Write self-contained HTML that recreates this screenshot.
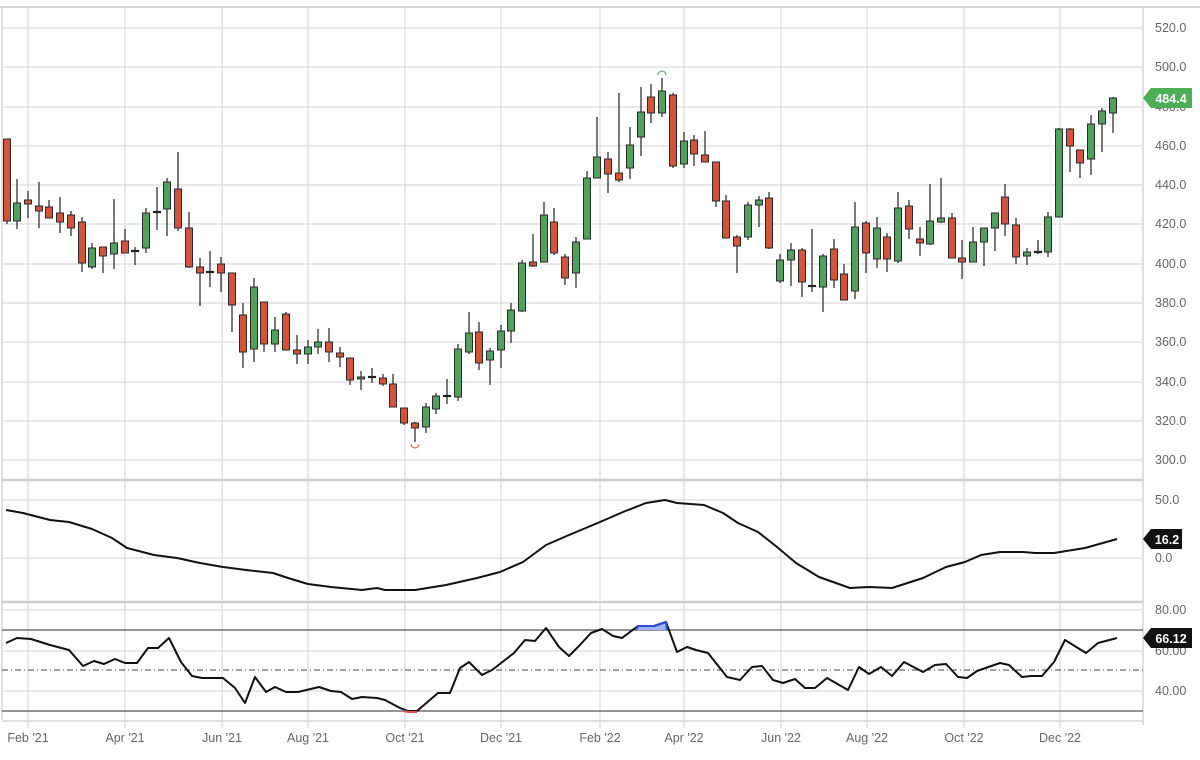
<!DOCTYPE html>
<html><head><meta charset="utf-8"><style>
html,body{margin:0;padding:0;background:#fff;}
svg{display:block;font-family:"Liberation Sans",sans-serif;}
.g{stroke:#dcdcdc;stroke-width:1.3;}
.r{fill:#d4533b;stroke:#2a2a2a;stroke-width:1;}
.gr{fill:#52a05e;stroke:#2a2a2a;stroke-width:1;}
.w{stroke:#222;stroke-width:1.2;}
.lab{fill:#666;font-size:12.5px;}
</style></head><body>
<svg width="1200" height="760" viewBox="0 0 1200 760" xmlns="http://www.w3.org/2000/svg">
<rect width="1200" height="760" fill="#fff"/>
<line x1="0" y1="7" x2="1200" y2="7" stroke="#d6d6d6" stroke-width="2"/>
<line x1="2" y1="7" x2="2" y2="720" stroke="#d6d6d6" stroke-width="1.5"/>
<line x1="1143" y1="7" x2="1143" y2="725" stroke="#d6d6d6" stroke-width="1.5"/>
<g class="g">
<line x1="28" y1="7" x2="28" y2="728"/><line x1="125" y1="7" x2="125" y2="728"/><line x1="222" y1="7" x2="222" y2="728"/><line x1="308" y1="7" x2="308" y2="728"/><line x1="405" y1="7" x2="405" y2="728"/><line x1="501" y1="7" x2="501" y2="728"/><line x1="600" y1="7" x2="600" y2="728"/><line x1="684" y1="7" x2="684" y2="728"/><line x1="781" y1="7" x2="781" y2="728"/><line x1="867" y1="7" x2="867" y2="728"/><line x1="964" y1="7" x2="964" y2="728"/><line x1="1060" y1="7" x2="1060" y2="728"/>
</g>
<g class="g">
<line x1="2" y1="28" x2="1143" y2="28"/><line x1="2" y1="67" x2="1143" y2="67"/><line x1="2" y1="107" x2="1143" y2="107"/><line x1="2" y1="146" x2="1143" y2="146"/><line x1="2" y1="185" x2="1143" y2="185"/><line x1="2" y1="224" x2="1143" y2="224"/><line x1="2" y1="264" x2="1143" y2="264"/><line x1="2" y1="303" x2="1143" y2="303"/><line x1="2" y1="342" x2="1143" y2="342"/><line x1="2" y1="382" x2="1143" y2="382"/><line x1="2" y1="421" x2="1143" y2="421"/><line x1="2" y1="460" x2="1143" y2="460"/>
<line x1="2" y1="500" x2="1143" y2="500"/><line x1="2" y1="558" x2="1143" y2="558"/>
<line x1="2" y1="610" x2="1143" y2="610"/><line x1="2" y1="651" x2="1143" y2="651"/><line x1="2" y1="691" x2="1143" y2="691"/>
</g>
<line x1="2" y1="480" x2="1143" y2="480" stroke="#cfcfcf" stroke-width="2.5"/>
<line x1="2" y1="602" x2="1143" y2="602" stroke="#cfcfcf" stroke-width="2.5"/>
<line x1="2" y1="721" x2="1143" y2="721" stroke="#d6d6d6" stroke-width="1.5"/>
<g class="lab">
<text x="1155" y="32">520.0</text><text x="1155" y="71">500.0</text><text x="1155" y="111">480.0</text><text x="1155" y="150">460.0</text><text x="1155" y="189">440.0</text><text x="1155" y="228">420.0</text><text x="1155" y="268">400.0</text><text x="1155" y="307">380.0</text><text x="1155" y="346">360.0</text><text x="1155" y="386">340.0</text><text x="1155" y="425">320.0</text><text x="1155" y="464">300.0</text>
<text x="1155" y="504">50.0</text><text x="1155" y="562">0.0</text>
<text x="1155" y="614">80.00</text><text x="1155" y="655">60.00</text><text x="1155" y="695">40.00</text>
</g>
<g class="lab" text-anchor="middle">
<text x="28" y="742">Feb '21</text><text x="125" y="742">Apr '21</text><text x="222" y="742">Jun '21</text><text x="308" y="742">Aug '21</text><text x="405" y="742">Oct '21</text><text x="501" y="742">Dec '21</text><text x="600" y="742">Feb '22</text><text x="684" y="742">Apr '22</text><text x="781" y="742">Jun '22</text><text x="867" y="742">Aug '22</text><text x="964" y="742">Oct '22</text><text x="1060" y="742">Dec '22</text>
</g>
<g>
<line class="w" x1="7" y1="139" x2="7" y2="224"/><rect class="r" x="3.5" y="139" width="7" height="82"/>
<line class="w" x1="17" y1="179" x2="17" y2="229"/><rect class="gr" x="13.5" y="203" width="7" height="18"/>
<line class="w" x1="28" y1="191" x2="28" y2="218"/><rect class="r" x="24.5" y="200" width="7" height="4"/>
<line class="w" x1="39" y1="182" x2="39" y2="228"/><rect class="r" x="35.5" y="206" width="7" height="5"/>
<line class="w" x1="49" y1="200" x2="49" y2="218"/><rect class="r" x="45.5" y="207" width="7" height="11"/>
<line class="w" x1="60" y1="197" x2="60" y2="233"/><rect class="r" x="56.5" y="213" width="7" height="9"/>
<line class="w" x1="71" y1="211" x2="71" y2="236"/><rect class="r" x="67.5" y="215" width="7" height="13"/>
<line class="w" x1="82" y1="217" x2="82" y2="272"/><rect class="r" x="78.5" y="222" width="7" height="41"/>
<line class="w" x1="92" y1="243" x2="92" y2="269"/><rect class="gr" x="88.5" y="248" width="7" height="19"/>
<line class="w" x1="103" y1="247" x2="103" y2="273"/><rect class="r" x="99.5" y="247" width="7" height="9"/>
<line class="w" x1="114" y1="199" x2="114" y2="269"/><rect class="gr" x="110.5" y="243" width="7" height="11"/>
<line class="w" x1="125" y1="229" x2="125" y2="253"/><rect class="r" x="121.5" y="241" width="7" height="12"/>
<line class="w" x1="135" y1="247" x2="135" y2="265"/><rect class="w" x="131.5" y="250.5" width="7" height="1"/>
<line class="w" x1="146" y1="208" x2="146" y2="253"/><rect class="gr" x="142.5" y="213" width="7" height="35"/>
<line class="w" x1="157" y1="187" x2="157" y2="230"/><rect class="w" x="153.5" y="211.5" width="7" height="1"/>
<line class="w" x1="167" y1="178" x2="167" y2="236"/><rect class="gr" x="163.5" y="182" width="7" height="27"/>
<line class="w" x1="178" y1="152" x2="178" y2="231"/><rect class="r" x="174.5" y="189" width="7" height="39"/>
<line class="w" x1="189" y1="212" x2="189" y2="268"/><rect class="r" x="185.5" y="228" width="7" height="39"/>
<line class="w" x1="200" y1="258" x2="200" y2="306"/><rect class="r" x="196.5" y="267" width="7" height="6"/>
<line class="w" x1="210" y1="251" x2="210" y2="287"/><rect class="w" x="206.5" y="271.5" width="7" height="1"/>
<line class="w" x1="221" y1="257" x2="221" y2="292"/><rect class="r" x="217.5" y="264" width="7" height="9"/>
<line class="w" x1="232" y1="273" x2="232" y2="332"/><rect class="r" x="228.5" y="273" width="7" height="32"/>
<line class="w" x1="243" y1="303" x2="243" y2="368"/><rect class="r" x="239.5" y="315" width="7" height="37"/>
<line class="w" x1="254" y1="278" x2="254" y2="362"/><rect class="gr" x="250.5" y="287" width="7" height="62"/>
<line class="w" x1="264" y1="302" x2="264" y2="352"/><rect class="r" x="260.5" y="302" width="7" height="42"/>
<line class="w" x1="275" y1="317" x2="275" y2="352"/><rect class="gr" x="271.5" y="330" width="7" height="14"/>
<line class="w" x1="286" y1="312" x2="286" y2="350"/><rect class="r" x="282.5" y="314" width="7" height="36"/>
<line class="w" x1="297" y1="335" x2="297" y2="364"/><rect class="r" x="293.5" y="350" width="7" height="4"/>
<line class="w" x1="308" y1="340" x2="308" y2="364"/><rect class="gr" x="304.5" y="347" width="7" height="7"/>
<line class="w" x1="318" y1="329" x2="318" y2="354"/><rect class="gr" x="314.5" y="342" width="7" height="5"/>
<line class="w" x1="329" y1="328" x2="329" y2="362"/><rect class="r" x="325.5" y="342" width="7" height="10"/>
<line class="w" x1="340" y1="347" x2="340" y2="367"/><rect class="r" x="336.5" y="353" width="7" height="4"/>
<line class="w" x1="350" y1="358" x2="350" y2="385"/><rect class="r" x="346.5" y="358" width="7" height="22"/>
<line class="w" x1="361" y1="371" x2="361" y2="390"/><rect class="gr" x="357.5" y="377" width="7" height="2"/>
<line class="w" x1="372" y1="368" x2="372" y2="383"/><rect class="w" x="368.5" y="376.5" width="7" height="1"/>
<line class="w" x1="383" y1="374" x2="383" y2="386"/><rect class="r" x="379.5" y="378" width="7" height="6"/>
<line class="w" x1="393" y1="374" x2="393" y2="407"/><rect class="r" x="389.5" y="384" width="7" height="23"/>
<line class="w" x1="404" y1="408" x2="404" y2="425"/><rect class="r" x="400.5" y="408" width="7" height="15"/>
<line class="w" x1="415" y1="422" x2="415" y2="442"/><rect class="r" x="411.5" y="423" width="7" height="5"/>
<line class="w" x1="426" y1="403" x2="426" y2="433"/><rect class="gr" x="422.5" y="407" width="7" height="20"/>
<line class="w" x1="436" y1="393" x2="436" y2="414"/><rect class="gr" x="432.5" y="396" width="7" height="13"/>
<line class="w" x1="447" y1="379" x2="447" y2="404"/><rect class="w" x="443.5" y="395.5" width="7" height="1"/>
<line class="w" x1="458" y1="344" x2="458" y2="401"/><rect class="gr" x="454.5" y="349" width="7" height="48"/>
<line class="w" x1="469" y1="312" x2="469" y2="354"/><rect class="gr" x="465.5" y="333" width="7" height="19"/>
<line class="w" x1="479" y1="322" x2="479" y2="370"/><rect class="r" x="475.5" y="332" width="7" height="31"/>
<line class="w" x1="490" y1="348" x2="490" y2="385"/><rect class="gr" x="486.5" y="351" width="7" height="9"/>
<line class="w" x1="501" y1="325" x2="501" y2="368"/><rect class="gr" x="497.5" y="331" width="7" height="19"/>
<line class="w" x1="511" y1="303" x2="511" y2="343"/><rect class="gr" x="507.5" y="310" width="7" height="21"/>
<line class="w" x1="522" y1="260" x2="522" y2="312"/><rect class="gr" x="518.5" y="263" width="7" height="48"/>
<line class="w" x1="533" y1="234" x2="533" y2="267"/><rect class="r" x="529.5" y="262" width="7" height="4"/>
<line class="w" x1="544" y1="202" x2="544" y2="262"/><rect class="gr" x="540.5" y="215" width="7" height="47"/>
<line class="w" x1="554" y1="208" x2="554" y2="255"/><rect class="r" x="550.5" y="222" width="7" height="31"/>
<line class="w" x1="565" y1="254" x2="565" y2="285"/><rect class="r" x="561.5" y="257" width="7" height="21"/>
<line class="w" x1="576" y1="237" x2="576" y2="288"/><rect class="gr" x="572.5" y="242" width="7" height="31"/>
<line class="w" x1="587" y1="171" x2="587" y2="239"/><rect class="gr" x="583.5" y="178" width="7" height="61"/>
<line class="w" x1="597" y1="117" x2="597" y2="178"/><rect class="gr" x="593.5" y="157" width="7" height="21"/>
<line class="w" x1="608" y1="152" x2="608" y2="193"/><rect class="r" x="604.5" y="159" width="7" height="15"/>
<line class="w" x1="619" y1="93" x2="619" y2="182"/><rect class="r" x="615.5" y="173" width="7" height="7"/>
<line class="w" x1="630" y1="127" x2="630" y2="179"/><rect class="gr" x="626.5" y="145" width="7" height="23"/>
<line class="w" x1="641" y1="87" x2="641" y2="156"/><rect class="gr" x="637.5" y="112" width="7" height="25"/>
<line class="w" x1="651" y1="84" x2="651" y2="123"/><rect class="r" x="647.5" y="97" width="7" height="16"/>
<line class="w" x1="662" y1="78" x2="662" y2="117"/><rect class="gr" x="658.5" y="91" width="7" height="22"/>
<line class="w" x1="673" y1="93" x2="673" y2="168"/><rect class="r" x="669.5" y="95" width="7" height="71"/>
<line class="w" x1="684" y1="132" x2="684" y2="168"/><rect class="gr" x="680.5" y="141" width="7" height="23"/>
<line class="w" x1="694" y1="135" x2="694" y2="166"/><rect class="r" x="690.5" y="140" width="7" height="14"/>
<line class="w" x1="705" y1="131" x2="705" y2="162"/><rect class="r" x="701.5" y="155" width="7" height="7"/>
<line class="w" x1="716" y1="162" x2="716" y2="207"/><rect class="r" x="712.5" y="162" width="7" height="39"/>
<line class="w" x1="726" y1="195" x2="726" y2="238"/><rect class="r" x="722.5" y="201" width="7" height="37"/>
<line class="w" x1="737" y1="235" x2="737" y2="273"/><rect class="r" x="733.5" y="237" width="7" height="9"/>
<line class="w" x1="748" y1="202" x2="748" y2="240"/><rect class="gr" x="744.5" y="205" width="7" height="32"/>
<line class="w" x1="759" y1="196" x2="759" y2="227"/><rect class="gr" x="755.5" y="200" width="7" height="5"/>
<line class="w" x1="769" y1="192" x2="769" y2="249"/><rect class="r" x="765.5" y="198" width="7" height="50"/>
<line class="w" x1="780" y1="254" x2="780" y2="283"/><rect class="gr" x="776.5" y="260" width="7" height="21"/>
<line class="w" x1="791" y1="243" x2="791" y2="286"/><rect class="gr" x="787.5" y="250" width="7" height="10"/>
<line class="w" x1="802" y1="248" x2="802" y2="297"/><rect class="r" x="798.5" y="250" width="7" height="32"/>
<line class="w" x1="812" y1="229" x2="812" y2="292"/><rect class="w" x="808.5" y="285.5" width="7" height="1"/>
<line class="w" x1="823" y1="254" x2="823" y2="312"/><rect class="gr" x="819.5" y="256" width="7" height="31"/>
<line class="w" x1="834" y1="239" x2="834" y2="288"/><rect class="r" x="830.5" y="249" width="7" height="31"/>
<line class="w" x1="844" y1="264" x2="844" y2="300"/><rect class="r" x="840.5" y="274" width="7" height="26"/>
<line class="w" x1="855" y1="202" x2="855" y2="299"/><rect class="gr" x="851.5" y="227" width="7" height="64"/>
<line class="w" x1="866" y1="221" x2="866" y2="273"/><rect class="r" x="862.5" y="223" width="7" height="30"/>
<line class="w" x1="877" y1="217" x2="877" y2="268"/><rect class="gr" x="873.5" y="228" width="7" height="31"/>
<line class="w" x1="887" y1="233" x2="887" y2="272"/><rect class="r" x="883.5" y="237" width="7" height="22"/>
<line class="w" x1="898" y1="192" x2="898" y2="263"/><rect class="gr" x="894.5" y="208" width="7" height="53"/>
<line class="w" x1="909" y1="200" x2="909" y2="239"/><rect class="r" x="905.5" y="206" width="7" height="23"/>
<line class="w" x1="920" y1="227" x2="920" y2="256"/><rect class="r" x="916.5" y="239" width="7" height="4"/>
<line class="w" x1="930" y1="184" x2="930" y2="245"/><rect class="gr" x="926.5" y="221" width="7" height="23"/>
<line class="w" x1="941" y1="178" x2="941" y2="223"/><rect class="gr" x="937.5" y="218" width="7" height="4"/>
<line class="w" x1="952" y1="213" x2="952" y2="258"/><rect class="r" x="948.5" y="218" width="7" height="40"/>
<line class="w" x1="962" y1="240" x2="962" y2="279"/><rect class="r" x="958.5" y="258" width="7" height="4"/>
<line class="w" x1="973" y1="227" x2="973" y2="262"/><rect class="gr" x="969.5" y="242" width="7" height="20"/>
<line class="w" x1="984" y1="228" x2="984" y2="266"/><rect class="gr" x="980.5" y="228" width="7" height="14"/>
<line class="w" x1="995" y1="213" x2="995" y2="251"/><rect class="gr" x="991.5" y="213" width="7" height="15"/>
<line class="w" x1="1005" y1="184" x2="1005" y2="236"/><rect class="r" x="1001.5" y="197" width="7" height="27"/>
<line class="w" x1="1016" y1="218" x2="1016" y2="264"/><rect class="r" x="1012.5" y="225" width="7" height="32"/>
<line class="w" x1="1027" y1="248" x2="1027" y2="265"/><rect class="gr" x="1023.5" y="252" width="7" height="4"/>
<line class="w" x1="1038" y1="240" x2="1038" y2="254"/><rect class="w" x="1034.5" y="251.5" width="7" height="1"/>
<line class="w" x1="1048" y1="212" x2="1048" y2="257"/><rect class="gr" x="1044.5" y="217" width="7" height="35"/>
<line class="w" x1="1059" y1="128" x2="1059" y2="217"/><rect class="gr" x="1055.5" y="129" width="7" height="88"/>
<line class="w" x1="1070" y1="128" x2="1070" y2="172"/><rect class="r" x="1066.5" y="129" width="7" height="17"/>
<line class="w" x1="1080" y1="150" x2="1080" y2="178"/><rect class="r" x="1076.5" y="150" width="7" height="13"/>
<line class="w" x1="1091" y1="115" x2="1091" y2="175"/><rect class="gr" x="1087.5" y="124" width="7" height="35"/>
<line class="w" x1="1102" y1="108" x2="1102" y2="152"/><rect class="gr" x="1098.5" y="111" width="7" height="13"/>
<line class="w" x1="1113" y1="97" x2="1113" y2="133"/><rect class="gr" x="1109.5" y="98" width="7" height="15"/>
</g>
<path d="M658 75 A4 4 0 0 1 666 75" fill="none" stroke="#52a05e" stroke-width="1"/>
<path d="M411 444 A4 4 0 0 0 419 444" fill="none" stroke="#d4533b" stroke-width="1"/>
<path d="M1143 98 L1151 88 L1192 88 L1192 108 L1151 108 Z" fill="#4caf55"/>
<text x="1171" y="103" text-anchor="middle" fill="#fff" font-size="12.5" font-weight="bold">484.4</text>
<polyline fill="none" stroke="#111" stroke-width="2" stroke-linejoin="round" points="6,510 23,513 50,520 69,522 92,529 112,538 127,548 154,555 177,558 200,563 223,567 246,570 273,573 288,578 308,584 331,587 362,590 377,588 385,590 415,590 446,585 477,578 500,572 523,562 546,545 569,535 600,522 623,512 646,503 665,500 677,503 704,505 723,513 738,523 758,532 777,547 796,563 819,577 850,588 869,587 892,588 923,578 946,567 965,562 981,555 1000,552 1023,552 1035,553 1054,553 1085,548 1117,539"/>
<path d="M1143 539 L1151 529 L1182 529 L1182 549 L1151 549 Z" fill="#111"/>
<text x="1167" y="544" text-anchor="middle" fill="#fff" font-size="12.5" font-weight="bold">16.2</text>
<line x1="2" y1="630" x2="1143" y2="630" stroke="#555" stroke-width="1.3"/>
<line x1="2" y1="711" x2="1143" y2="711" stroke="#555" stroke-width="1.3"/>
<line x1="2" y1="670" x2="1143" y2="670" stroke="#444" stroke-width="1" stroke-dasharray="6,3,1,3"/>
<path d="M636 630 L638 626 L654 626 L666 622 L667 630 Z" fill="#9fb3f0"/>
<polyline fill="none" stroke="#111" stroke-width="2" stroke-linejoin="round" points="6,643 17,638 31,639 50,645 69,650 83,666 94,661 104,664 115,659 125,663 137,663 148,648 158,648 169,638 181,662 192,676 202,678 223,678 235,688 245,703 255,677 266,692 275,687 286,692 298,692 319,687 331,691 341,692 352,699 362,697 377,698 385,700 400,708 408,711 417,711 431,699 438,693 450,693 460,668 469,662 482,675 492,670 514,653 525,640 535,641 546,628 559,647 569,656 578,647 591,633 602,629 613,636 622,638 638,626 654,626 666,622 677,652 687,647 696,650 708,653 727,677 740,680 752,667 762,666 773,680 783,683 795,679 805,688 815,688 827,678 848,690 859,667 869,674 881,667 892,676 904,662 923,672 935,665 946,664 958,677 967,678 977,671 1000,663 1009,665 1022,677 1031,676 1042,676 1054,662 1065,640 1086,653 1098,643 1117,638"/>
<polyline fill="none" stroke="#2c4fd6" stroke-width="2" points="636,630 638,626 654,626 666,622 667,630"/>
<polyline fill="none" stroke="#e05050" stroke-width="2" points="404,711 408,712 417,712"/>
<path d="M1143 638 L1151 628 L1192 628 L1192 648 L1151 648 Z" fill="#111"/>
<text x="1171" y="643" text-anchor="middle" fill="#fff" font-size="12.5" font-weight="bold">66.12</text>
</svg>
</body></html>
